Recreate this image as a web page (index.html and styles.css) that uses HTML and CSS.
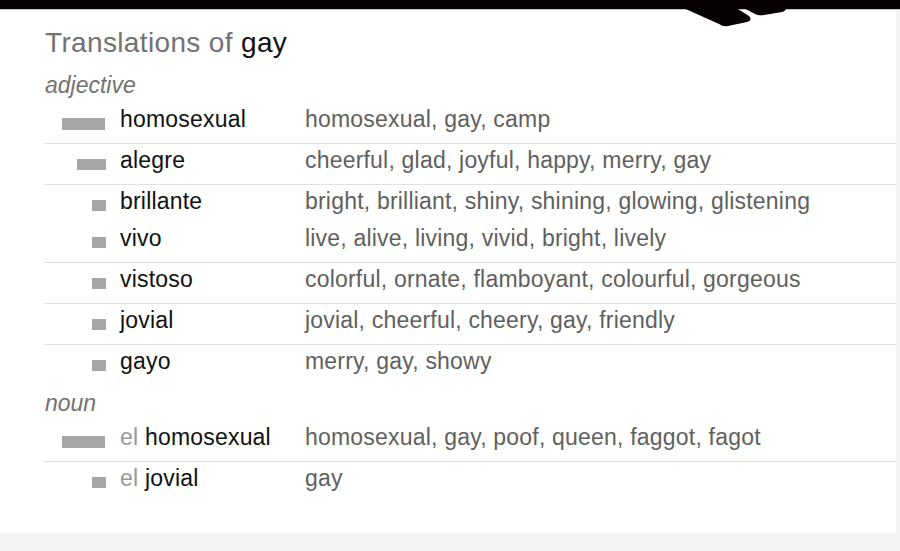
FILE: index.html
```html
<!DOCTYPE html>
<html>
<head>
<meta charset="utf-8">
<link rel="stylesheet" href="styles.css">
</head>
<body>
<div class="topbar"></div>
<svg class="deco" width="900" height="30" viewBox="0 0 900 30">
  <path d="M679,6 L719,24 Q723,27 728,26 L747,22 Q753,20 749,16 L733,6 Z" fill="#070106"/>
  <path d="M740,6 L755,14 Q759,16 764,15 L782,12 Q788,10 784,7 L780,5 Z" fill="#070106"/>
  <path d="M786,8 Q830,7 890,4 L890,8 Z" fill="#070106"/>
</svg>
<div class="page">
  <div class="card">
    <h1 class="title">Translations of <span class="q">gay</span></h1>

    <div class="section">
      <div class="pos">adjective</div>
      <div class="group first">
        <div class="line"><div class="barcell"><span class="bar b3"></span></div><div class="word">homosexual</div><div class="trans">homosexual, gay, camp</div></div>
      </div>
      <div class="group">
        <div class="line"><div class="barcell"><span class="bar b2"></span></div><div class="word">alegre</div><div class="trans">cheerful, glad, joyful, happy, merry, gay</div></div>
      </div>
      <div class="group">
        <div class="line"><div class="barcell"><span class="bar b1"></span></div><div class="word">brillante</div><div class="trans">bright, brilliant, shiny, shining, glowing, glistening</div></div>
        <div class="line"><div class="barcell"><span class="bar b1"></span></div><div class="word">vivo</div><div class="trans">live, alive, living, vivid, bright, lively</div></div>
      </div>
      <div class="group">
        <div class="line"><div class="barcell"><span class="bar b1"></span></div><div class="word">vistoso</div><div class="trans">colorful, ornate, flamboyant, colourful, gorgeous</div></div>
      </div>
      <div class="group">
        <div class="line"><div class="barcell"><span class="bar b1"></span></div><div class="word">jovial</div><div class="trans">jovial, cheerful, cheery, gay, friendly</div></div>
      </div>
      <div class="group">
        <div class="line"><div class="barcell"><span class="bar b1"></span></div><div class="word">gayo</div><div class="trans">merry, gay, showy</div></div>
      </div>
    </div>

    <div class="section">
      <div class="pos">noun</div>
      <div class="group first">
        <div class="line"><div class="barcell"><span class="bar b3"></span></div><div class="word"><span class="art">el</span> homosexual</div><div class="trans">homosexual, gay, poof, queen, faggot, fagot</div></div>
      </div>
      <div class="group">
        <div class="line"><div class="barcell"><span class="bar b1"></span></div><div class="word"><span class="art">el</span> jovial</div><div class="trans">gay</div></div>
      </div>
    </div>
  </div>
</div>
</body>
</html>
```

FILE: styles.css
```css
html, body {
  margin: 0;
  padding: 0;
}
body {
  background: #f4f4f4;
  font-family: "Liberation Sans", Arial, sans-serif;
  width: 900px;
  height: 551px;
  overflow: hidden;
  position: relative;
}
.topbar {
  height: 9px;
  background: #070106;
  border-bottom: 1px solid #c8c8c8;
}
.deco {
  position: absolute;
  left: 0;
  top: 0;
}
.page {
  display: flex;
}
.card {
  width: 852px;
  height: 505px;
  background: #fff;
  padding: 18px 0 0 44px;
}
.title {
  margin: 0 0 14px 1px;
  font-weight: normal;
  font-size: 28px;
  line-height: 30px;
  color: #727272;
  letter-spacing: 0.35px;
}
.title .q {
  color: #111;
}
.section + .section {
  margin-top: 5px;
}
.pos {
  font-style: italic;
  font-size: 23px;
  line-height: 26px;
  color: #727272;
  margin: 0 0 4px 1px;
}
.group {
  border-top: 1px solid #e0e0e0;
  padding-top: 3px;
}
.group.first {
  border-top-color: transparent;
}
.line {
  display: grid;
  grid-template-columns: 62px 199px 1fr;
  height: 37px;
  font-size: 23px;
  line-height: 26px;
  letter-spacing: 0.2px;
}
.barcell {
  display: flex;
  justify-content: flex-end;
  align-items: flex-start;
  padding-top: 12px;
}
.bar {
  display: block;
  background: #a6a6a6;
  height: 11px;
}
.bar.b3 {
  width: 43px;
  height: 12px;
  margin-right: 1px;
}
.bar.b2 {
  width: 29px;
}
.bar.b1 {
  width: 14px;
}
.word {
  color: #111;
  padding-left: 14px;
}
.art {
  color: #999;
}
.trans {
  color: #5f5f5f;
}
```
